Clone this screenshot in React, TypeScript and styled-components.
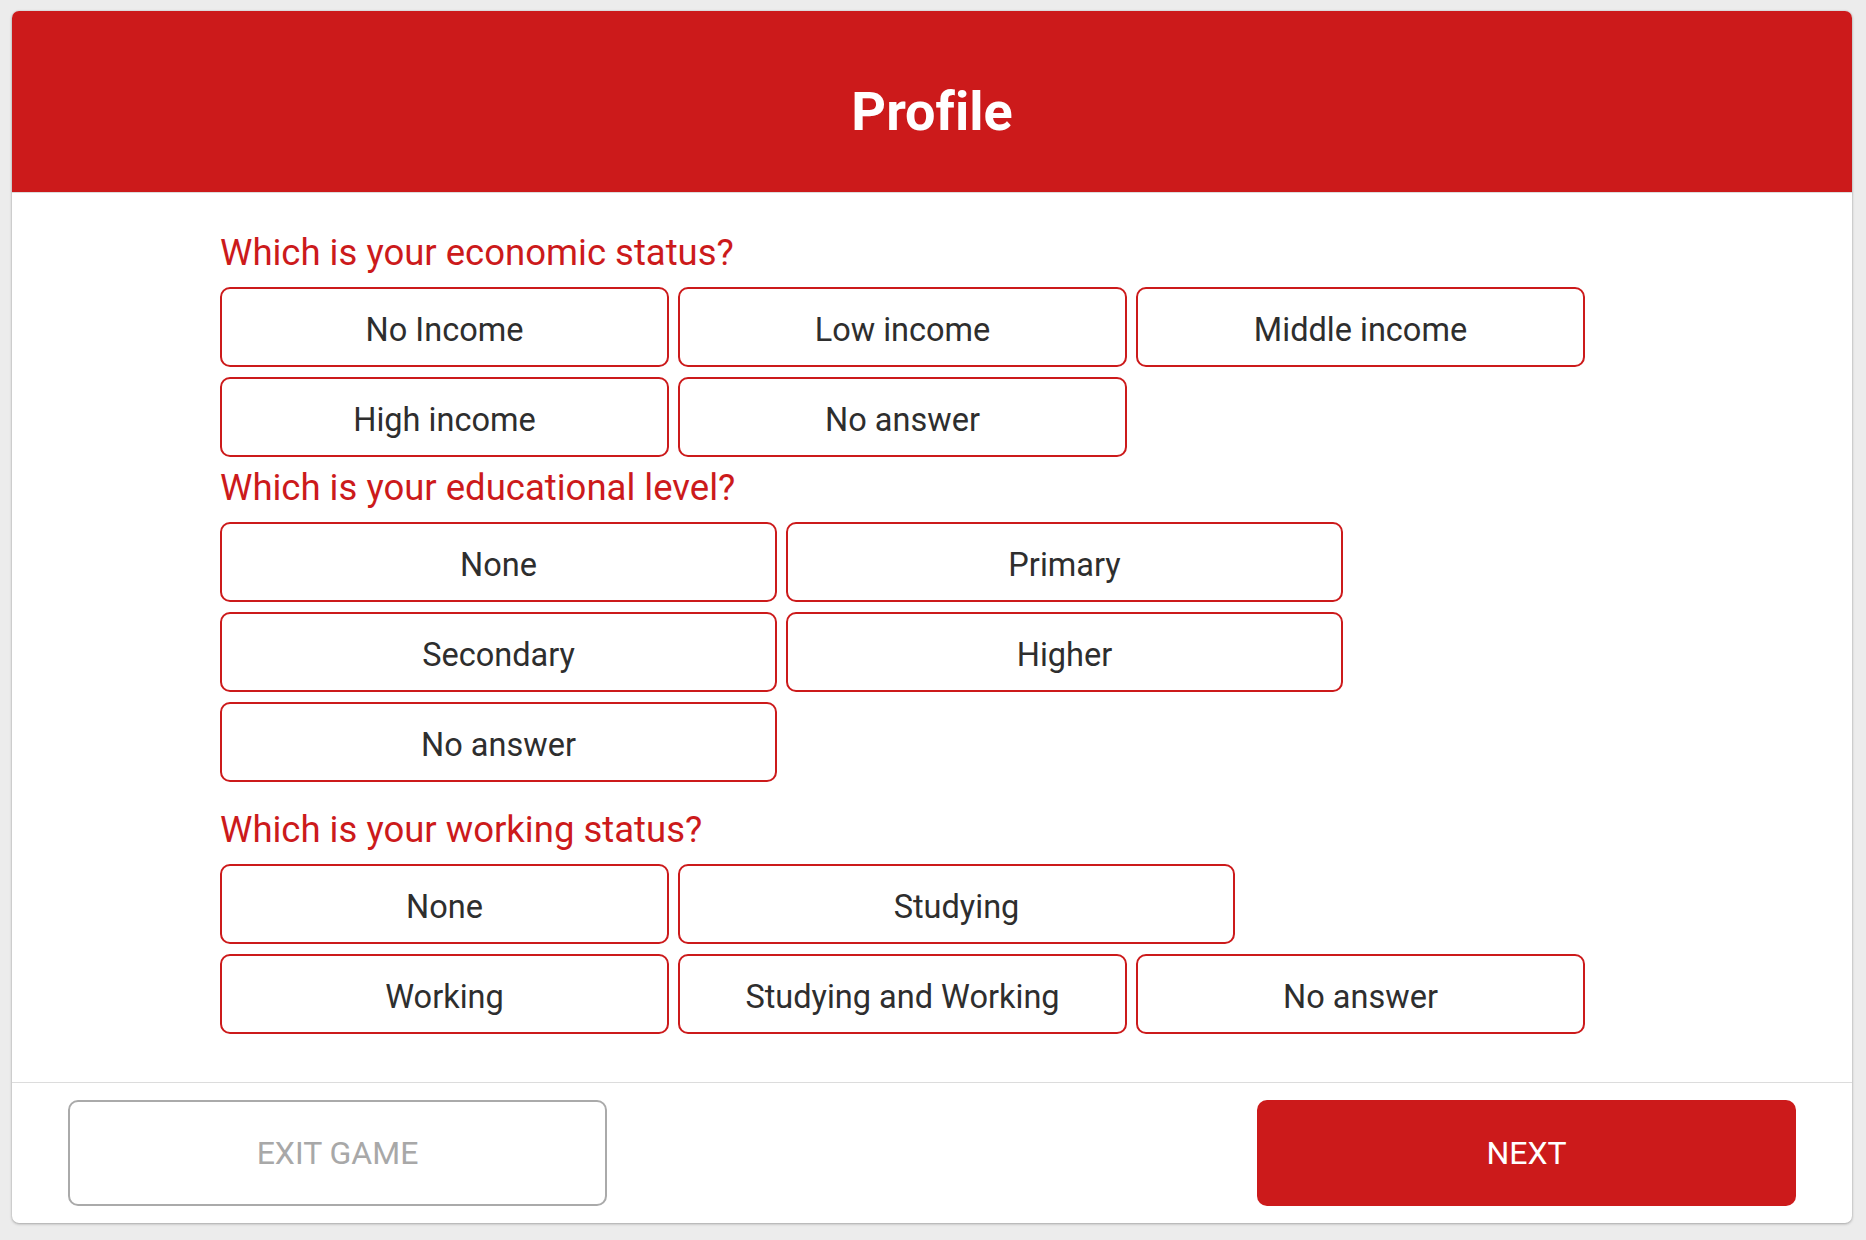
import React from "react";
import styled, { createGlobalStyle } from "styled-components";

const Global = createGlobalStyle`
  html, body { margin: 0; padding: 0; background: #ececec; }
  body { font-family: Roboto, "Noto Sans", Arial, sans-serif; font-variant-ligatures: none; }
  * { box-sizing: border-box; }
`;

const RED = "#cc1a1b";

const Page = styled.div`
  padding: 11px 14px 16px 12px;
`;

const Card = styled.div`
  background: #fff;
  border-radius: 7px;
  box-shadow: 0 1px 3px rgba(0, 0, 0, 0.28), 0 0 2px rgba(0, 0, 0, 0.12);
  overflow: hidden;
  display: flex;
  flex-direction: column;
`;

const Header = styled.header`
  height: 182px;
  background: ${RED};
  border-bottom: 1px solid #dcdcdc;
  display: flex;
  align-items: center;
  justify-content: center;
`;

const Title = styled.h1`
  margin: 0;
  color: #fff;
  font-weight: 700;
  font-size: 54px;
  line-height: 1;
  padding-top: 20px;
  font-variant-ligatures: none;
`;

const Content = styled.main`
  padding: 39px 208px 48px 208px;
  display: flex;
  flex-direction: column;
`;

const Section = styled.section<{ $extra?: number }>`
  display: flex;
  flex-direction: column;
  margin-bottom: ${(p) => p.$extra ?? 10}px;
`;

const Question = styled.h2`
  margin: 0 0 13px 0;
  color: ${RED};
  font-weight: 400;
  font-size: 36.5px;
  line-height: 42px;
`;

const Options = styled.div`
  display: flex;
  flex-wrap: wrap;
  column-gap: 9px;
  row-gap: 10px;
  width: 1370px;
`;

const Option = styled.button<{ $wide?: boolean }>`
  width: ${(p) => (p.$wide ? 557 : 449)}px;
  height: 80px;
  background: #fff;
  border: 2px solid ${RED};
  border-radius: 10px;
  color: #2e2e2e;
  font-family: Roboto, "Noto Sans", Arial, sans-serif;
  font-size: 32.5px;
  font-weight: 400;
  padding: 6px 0 0 0;
  cursor: pointer;
`;

const Footer = styled.footer`
  border-top: 1px solid #dcdcdc;
  padding: 17px 56px 17px 56px;
  display: flex;
  justify-content: space-between;
`;

const FooterButton = styled.button<{ $primary?: boolean }>`
  width: 539px;
  height: 106px;
  border-radius: 10px;
  font-family: Roboto, "Noto Sans", Arial, sans-serif;
  font-size: 32px;
  font-weight: 400;
  text-transform: uppercase;
  cursor: pointer;
  background: ${(p) => (p.$primary ? RED : "#fff")};
  color: ${(p) => (p.$primary ? "#fff" : "#a8a8a8")};
  border: ${(p) => (p.$primary ? "none" : "2px solid #aaaaaa")};
`;

type Q = { title: string; options: { label: string; wide?: boolean }[]; extra?: number };

const questions: Q[] = [
  {
    title: "Which is your economic status?",
    options: [
      { label: "No Income" },
      { label: "Low income" },
      { label: "Middle income" },
      { label: "High income" },
      { label: "No answer" },
    ],
  },
  {
    title: "Which is your educational level?",
    extra: 27,
    options: [
      { label: "None", wide: true },
      { label: "Primary", wide: true },
      { label: "Secondary", wide: true },
      { label: "Higher", wide: true },
      { label: "No answer", wide: true },
    ],
  },
  {
    title: "Which is your working status?",
    extra: 0,
    options: [
      { label: "None" },
      { label: "Studying", wide: true },
      { label: "Working" },
      { label: "Studying and Working" },
      { label: "No answer" },
    ],
  },
];

export default function App() {
  return (
    <Page>
      <Global />
      <Card>
        <Header>
          <Title>Profile</Title>
        </Header>
        <Content>
          {questions.map((q) => (
            <Section key={q.title} $extra={q.extra}>
              <Question>{q.title}</Question>
              <Options>
                {q.options.map((o, i) => (
                  <Option key={i} $wide={o.wide}>
                    {o.label}
                  </Option>
                ))}
              </Options>
            </Section>
          ))}
        </Content>
        <Footer>
          <FooterButton>Exit game</FooterButton>
          <FooterButton $primary>Next</FooterButton>
        </Footer>
      </Card>
    </Page>
  );
}
